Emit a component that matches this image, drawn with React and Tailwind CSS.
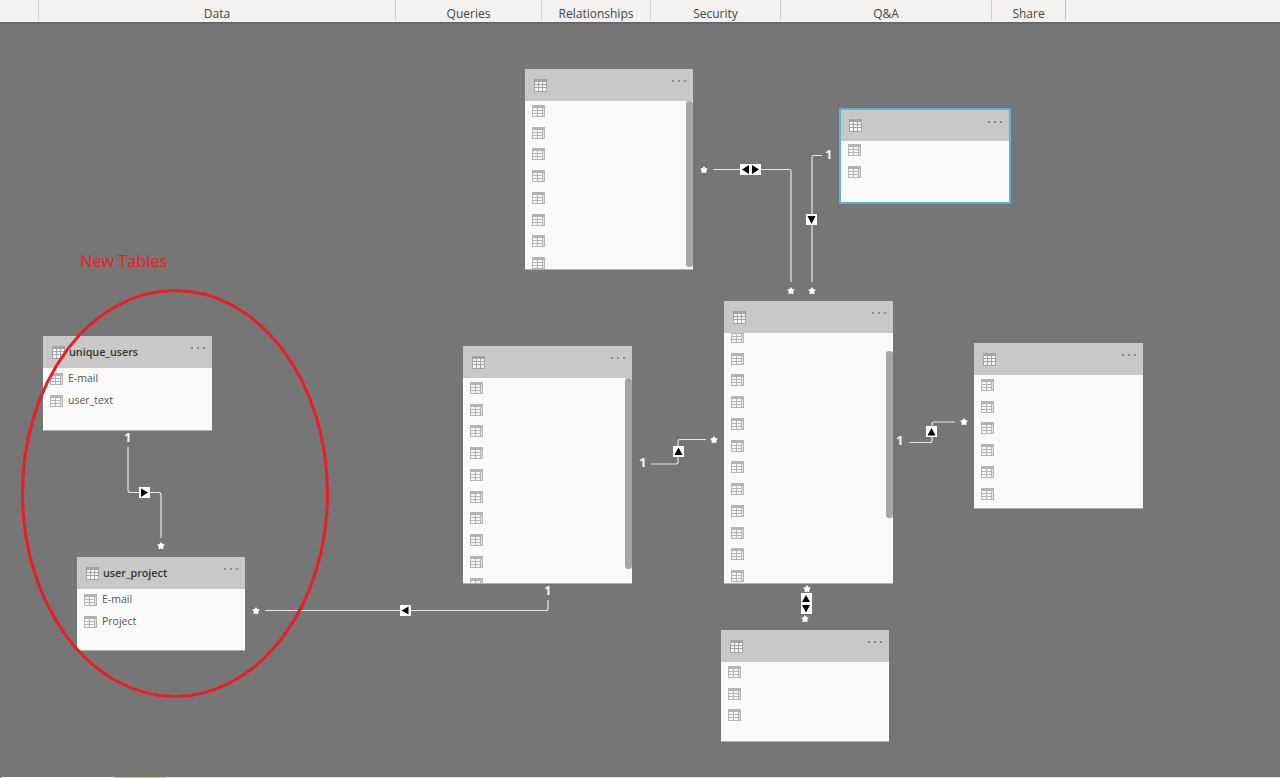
const tabs = [
  { label: "", width: "w-[38px]" },
  { label: "Data", width: "w-[357px]" },
  { label: "Queries", width: "w-[146px]" },
  { label: "Relationships", width: "w-[109px]" },
  { label: "Security", width: "w-[130px]" },
  { label: "Q&A", width: "w-[211px]" },
  { label: "Share", width: "w-[74px]" },
];

function HeaderIcon() {
  return (
    <svg width="13" height="13" viewBox="0 0 13 13" className="shrink-0">
      <rect width="13" height="13" fill="#a3a3a3" />
      <path d="M1 3h3v2H1zM5 3h3v2H5zM9 3h3v2H9zM1 6h3v2H1zM5 6h3v2H5zM9 6h3v2H9zM1 9h3v3H1zM5 9h3v3H5zM9 9h3v3H9z" fill="#f4f4f4" />
    </svg>
  );
}

function RowIcon() {
  return (
    <svg width="13" height="12" viewBox="0 0 13 12" className="shrink-0">
      <rect width="13" height="12" fill="#b4b4b4" />
      <path d="M1 3h4v2H1zM6 3h4v2H6zM1 6h4v2H1zM6 6h4v2H6zM1 9h4v2H1zM6 9h4v2H6z" fill="#f6f6f6" />
      <path d="M11 3h1v8h-1z" fill="#e2e2e2" />
    </svg>
  );
}

function Row({ label }) {
  return (
    <li className="flex h-[21.75px] shrink-0 items-center gap-[5px] pl-[7px] text-[10.5px] text-[#555]">
      <RowIcon />
      {label && <span>{label}</span>}
    </li>
  );
}

// place holds the canvas position and size, rows is a list of labels
function TableCard({ place, name, rows, listClass = "-mt-px", scroll, selected }) {
  return (
    <div className={`absolute flex flex-col overflow-hidden bg-[#fafafa] ${selected ? "border-2 border-[#5fb3cf]" : "border-b border-[#b0b0b0]"} ${place}`}>
      <div className={`relative z-10 flex shrink-0 items-center gap-[4px] bg-[#c8c8c8] ${selected ? "h-[31px] pl-[8px]" : "h-[32px] pl-[9px]"}`}>
        <HeaderIcon />
        {name && <span className="text-[10.75px] font-semibold text-[#333]">{name}</span>}
        <div className="absolute right-[7px] top-[11px] flex gap-[4px]">
          <span className="size-[2px] rounded-full bg-[#777]" />
          <span className="size-[2px] rounded-full bg-[#777]" />
          <span className="size-[2px] rounded-full bg-[#777]" />
        </div>
      </div>
      <ul className={`flex flex-col ${listClass}`}>
        {rows.map((label, i) => (
          <Row key={i} label={label} />
        ))}
      </ul>
      {scroll && <div className={`absolute right-0 w-[7px] rounded-[3px] bg-[#a6a6a6] ${scroll}`} />}
    </div>
  );
}

function Star({ x, y }) {
  const pts = [];
  for (let i = 0; i < 10; i++) {
    const r = i % 2 ? 2.4 : 4;
    const a = (Math.PI / 5) * i - Math.PI / 2;
    pts.push(`${x + r * Math.cos(a)},${y + r * Math.sin(a)}`);
  }
  return <polygon points={pts.join(" ")} fill="#fff" />;
}

// white marker square with black arrow heads
function Marker({ x, y, w = 11, h = 11, arrows }) {
  return (
    <g>
      <rect x={x} y={y} width={w} height={h} fill="#fff" />
      {arrows.map((d, i) => (
        <polygon key={i} points={d} fill="#000" />
      ))}
    </g>
  );
}

function One({ place }) {
  return <span className={`absolute text-[13px] font-bold leading-none text-[#eef2f4] ${place}`}>1</span>;
}

function Connectors() {
  return (
    <svg className="absolute inset-0 z-20" width="1280" height="755" viewBox="0 22 1280 755" fill="none">
      <g stroke="#e6e6e6" strokeWidth="1.2">
        <path d="M713 169.5H789a2 2 0 0 1 2 2V282" />
        <path d="M822 155.5H814a2 2 0 0 0 -2 2V282" />
        <path d="M128 447V490a2.5 2.5 0 0 0 2.5 2.5H158.500a2.500 2.500 0 0 1 2.500 2.500V538" />
        <path d="M265 610.500H546a2 2 0 0 0 2 -2V600" />
        <path d="M651 464H676a2 2 0 0 0 2 -2V441.500a2 2 0 0 1 2 -2H706" />
        <path d="M909 442.500H930a2 2 0 0 0 2 -2V424a2 2 0 0 1 2 -2H955" />
      </g>
      <Star x={704} y={170} />
      <Star x={791} y={291} />
      <Star x={812} y={291} />
      <Star x={161} y={546} />
      <Star x={256} y={611} />
      <Star x={714} y={440} />
      <Star x={964} y={422} />
      <Star x={807} y={589} />
      <Star x={805} y={619} />
      <Marker x={740} y={164} w={21} arrows={["742,169.500 749,165 749,174", "759,169.500 752,165 752,174"]} />
      <Marker x={806} y={214} arrows={["807.500,216 815.500,216 811.500,224"]} />
      <Marker x={139} y={487} arrows={["141,488.500 148,492.500 141,497"]} />
      <Marker x={400} y={605} arrows={["408.500,606.500 401.500,610.500 408.500,614.500"]} />
      <Marker x={673} y={446} arrows={["678.500,447.500 682.500,455 674.500,455"]} />
      <Marker x={926} y={426} arrows={["931.500,428 935.500,435.500 927.500,435.500"]} />
      <Marker x={801} y={593} h={21} arrows={["806,595 810,602 802,602", "806,612.500 810,605 802,605"]} />
      <ellipse cx="175" cy="493.500" rx="152.500" ry="203" stroke="#ed1c24" strokeWidth="3" />
    </svg>
  );
}

export default function App() {
  return (
    <div className="flex h-[778px] w-[1280px] flex-col overflow-hidden bg-[#767676] font-['Open_Sans',sans-serif]">
      <div className="z-30 flex h-[22px] shrink-0 items-start bg-[#f3f2f1] shadow-[0_1px_2px_rgba(0,0,0,0.25)]">
        {tabs.map((tab, i) => (
          <div key={i} className={`flex h-[20px] justify-center text-[12px] leading-[28px] text-[#444] ${tab.width} ${i > 0 ? "border-l border-[#cfcfcf]" : ""}`}>
            {tab.label}
          </div>
        ))}
        <div className="h-[20px] border-l border-[#c4c4c4]" />
      </div>

      <div className="relative flex-1">
        <TableCard place="left-[525px] top-[47px] h-[201px] w-[168px]" rows={Array(8).fill("")} scroll="top-[32px] bottom-[2px]" />
        <TableCard place="left-[839px] top-[86px] h-[96px] w-[172px]" rows={["", ""]} listClass="-mt-[2px]" selected />
        <TableCard place="left-[724px] top-[279px] h-[283px] w-[169px]" rows={Array(12).fill("")} listClass="-mt-[7px]" scroll="top-[50px] h-[167px]" />
        <TableCard place="left-[463px] top-[324px] h-[238px] w-[169px]" rows={Array(10).fill("")} scroll="top-[32px] h-[191px]" />
        <TableCard place="left-[974px] top-[321px] h-[166px] w-[169px]" rows={Array(6).fill("")} />
        <TableCard place="left-[721px] top-[608px] h-[112px] w-[168px]" rows={["", "", ""]} />
        <TableCard place="left-[43px] top-[314px] h-[95px] w-[169px]" name="unique_users" rows={["E-mail", "user_text"]} listClass="mt-0" />
        <TableCard place="left-[77px] top-[535px] h-[94px] w-[168px]" name="user_project" rows={["E-mail", "Project"]} listClass="mt-0" />

        <Connectors />

        <One place="left-[825px] top-[126px]" />
        <One place="left-[124px] top-[409px]" />
        <One place="left-[544px] top-[562px]" />
        <One place="left-[639px] top-[434px]" />
        <One place="left-[896px] top-[412px]" />

        <span className="absolute left-[80px] top-[228px] z-20 text-[16.3px] leading-[22px] text-[#ed1c24]">New Tables</span>
      </div>

      <div className="flex h-px shrink-0">
        <div className="w-[2px] bg-[#999]" />
        <div className="w-[113px] bg-white" />
        <div className="w-[50px] bg-[#f2c811]" />
        <div className="flex-1 bg-[#e6e6e6]" />
      </div>
    </div>
  );
}
